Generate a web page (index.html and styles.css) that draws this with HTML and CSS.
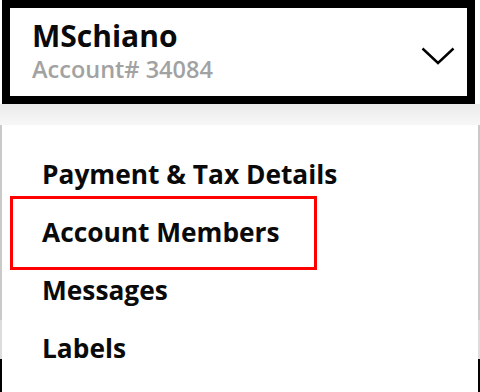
FILE: index.html
```html
<!DOCTYPE html>
<html>
<head>
<meta charset="utf-8">
<link rel="stylesheet" href="styles.css">
</head>
<body>
  <header class="account-bar">
    <div class="account-info">
      <div class="account-name">MSchiano</div>
      <div class="account-number">Account# 34084</div>
    </div>
    <svg class="chevron" width="34" height="18" viewBox="0 0 34 18">
      <polyline points="1.5,1.5 17,16 32.5,1.5" fill="none" stroke="#000" stroke-width="2.4" stroke-linejoin="miter"/>
    </svg>
  </header>
  <div class="shade"></div>
  <nav class="menu">
    <a class="menu-item">Payment &amp; Tax Details</a>
    <a class="menu-item active">Account Members</a>
    <a class="menu-item">Messages</a>
    <a class="menu-item">Labels</a>
  </nav>
</body>
</html>
```

FILE: styles.css
```css
html, body {
  margin: 0;
  padding: 0;
  background: #fff;
  font-family: "Open Sans", "Noto Sans", sans-serif;
  overflow: hidden;
}

.account-bar {
  box-sizing: border-box;
  margin-left: 2px;
  width: 473px;
  height: 104px;
  border: 8px solid #000;
  padding: 10px 12px 0 22px;
  display: flex;
  justify-content: space-between;
  align-items: flex-start;
  background: #fff;
}

.account-name {
  font-size: 30px;
  font-weight: 700;
  line-height: 36px;
  color: #0a0a0a;
}

.account-number {
  margin-top: 1px;
  font-size: 23.5px;
  font-weight: 600;
  line-height: 28px;
  color: #a2a2a2;
}

.chevron {
  margin-top: 29px;
  display: block;
}

.shade {
  height: 21px;
  background: linear-gradient(#ebebeb, #f7f7f7);
}

.menu {
  height: 267px;
  box-sizing: border-box;
  padding-top: 20px;
  background: #fff;
  border-left: 2px solid #c9c9c9;
  border-right: 2px solid #c9c9c9;
  border-image: linear-gradient(#c9c9c9 0 195px, #dcdcdc 195px 233px, #000 233px) 1;
  border-image-width: 0 2px 0 2px;
  display: flex;
  flex-direction: column;
}

.menu-item {
  display: block;
  padding-left: 40px;
  font-size: 26.3px;
  font-weight: 700;
  line-height: 58px;
  color: #0a0a0a;
  position: relative;
}

.menu-item.active::before {
  content: "";
  position: absolute;
  left: 8px;
  top: -7px;
  width: 307px;
  height: 74px;
  box-sizing: border-box;
  border: 3px solid #ff0000;
}
```
